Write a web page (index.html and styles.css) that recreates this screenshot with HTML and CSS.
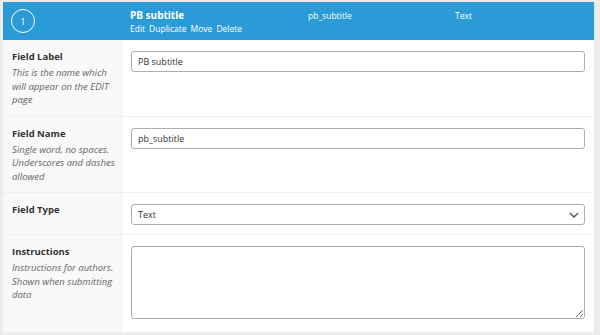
FILE: index.html
```html
<!DOCTYPE html>
<html lang="en">
<head>
    <meta charset="UTF-8">
    <title>Field settings</title>
    <link rel="stylesheet" href="styles.css">
</head>
<body>
    <div class="field">
        <div class="field-head">
            <div class="field-order"><span class="order-num">1</span></div>
            <div class="field-title">
                <strong>PB subtitle</strong>
                <div class="row-actions">
                    <a href="#">Edit</a>
                    <a href="#">Duplicate</a>
                    <a href="#">Move</a>
                    <a href="#">Delete</a>
                </div>
            </div>
            <div class="field-key">pb_subtitle</div>
            <div class="field-kind">Text</div>
        </div>

        <div class="settings">
            <div class="setting">
                <div class="label">
                    <label>Field Label</label>
                    <p>This is the name which will appear on the EDIT page</p>
                </div>
                <div class="input">
                    <input type="text" value="PB subtitle">
                </div>
            </div>
            <div class="setting">
                <div class="label">
                    <label>Field Name</label>
                    <p>Single word, no spaces. Underscores and dashes allowed</p>
                </div>
                <div class="input">
                    <input type="text" value="pb_subtitle">
                </div>
            </div>
            <div class="setting">
                <div class="label">
                    <label>Field Type</label>
                </div>
                <div class="input">
                    <div class="select">
                        <span>Text</span>
                        <svg width="10" height="6" viewBox="0 0 10 6"><path d="M1 1l4 4 4-4" fill="none" stroke="#555" stroke-width="1.4"/></svg>
                    </div>
                </div>
            </div>
            <div class="setting">
                <div class="label">
                    <label>Instructions</label>
                    <p>Instructions for authors. Shown when submitting data</p>
                </div>
                <div class="input input-tall">
                    <textarea></textarea>
                </div>
            </div>
        </div>
    </div>
</body>
</html>
```

FILE: styles.css
```css
* {
    margin: 0;
    padding: 0;
    box-sizing: border-box;
}

body {
    background-color: #ececec;
    font-family: "Open Sans", Arial, sans-serif;
    color: #333;
    padding: 2px 5px 0 3px;
}

.field {
    background-color: #fff;
    border-right: 1px solid #e5e5e5;
}

.field-head {
    display: grid;
    grid-template-columns: 119px 186px 147px 1fr;
    height: 38px;
    background-color: #2a9bd7;
    color: #fff;
    font-size: 8.5px;
}

.field-order {
    display: flex;
    align-items: center;
    padding-left: 8px;
}

.order-num {
    width: 24px;
    height: 24px;
    border: 1.5px solid #fff;
    border-radius: 50%;
    display: flex;
    align-items: center;
    justify-content: center;
    font-size: 8.5px;
}

.field-title {
    padding: 6px 0 0 8px;
}

.field-title strong {
    display: block;
    font-size: 10px;
    font-weight: bold;
    line-height: 14px;
}

.row-actions {
    display: flex;
    gap: 4px;
    font-size: 8.5px;
    line-height: 13px;
}

.row-actions a {
    color: #fff;
    text-decoration: none;
}

.field-key,
.field-kind {
    padding-top: 7px;
    line-height: 14px;
}

.setting {
    display: grid;
    grid-template-columns: 119px 1fr;
    border-bottom: 1px solid #f0f0f0;
}

.label {
    background-color: #f9f9f9;
    border-right: 1px solid #eee;
    padding: 10px 3px 9px 9px;
}

.label label {
    display: block;
    font-size: 9.5px;
    font-weight: bold;
    color: #333;
    line-height: 14px;
}

.label p {
    margin-top: 2px;
    font-size: 9.5px;
    font-style: italic;
    line-height: 13.5px;
    color: #666;
}

.input {
    padding: 11px 9px 9px 9px;
}

.input-tall {
    padding-bottom: 13px;
}

input,
.select,
textarea {
    display: block;
    width: 100%;
    height: 21px;
    border: 1px solid #adadad;
    border-radius: 3px;
    background-color: #fff;
    font-family: "Open Sans", Arial, sans-serif;
    font-size: 9px;
    color: #333;
    padding: 0 6px;
}

.select {
    display: flex;
    align-items: center;
    justify-content: space-between;
    padding-right: 5px;
}

textarea {
    height: 73px;
    resize: vertical;
}
```
